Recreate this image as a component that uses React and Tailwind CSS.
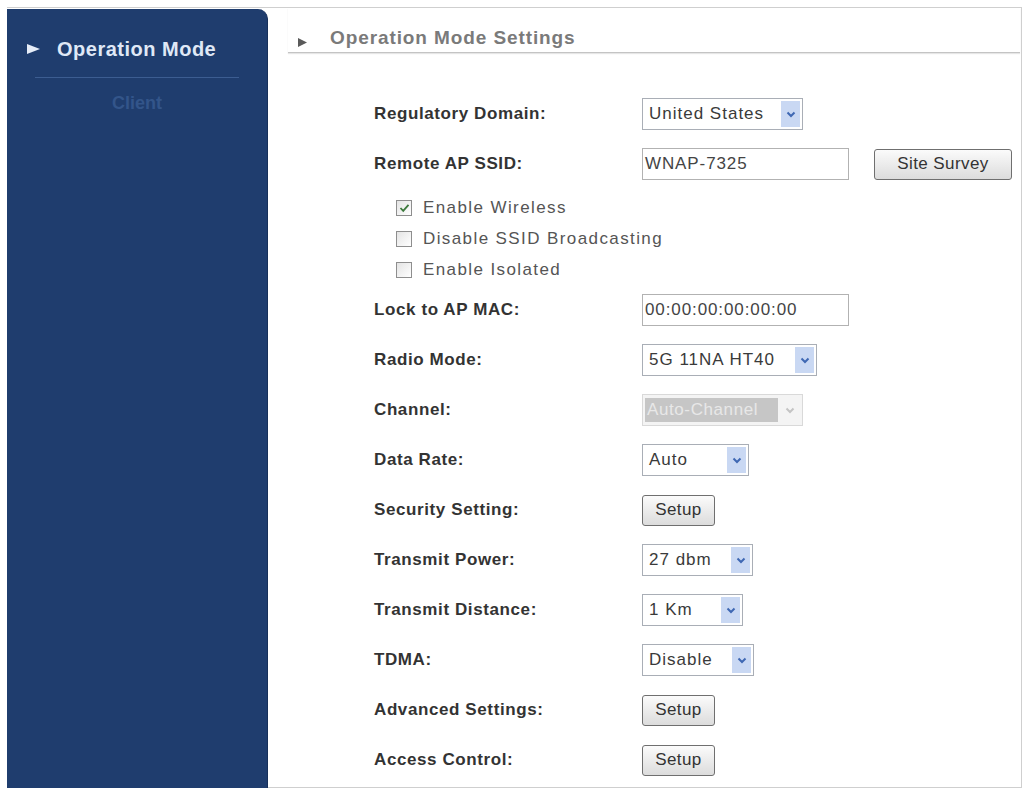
import React from 'react'

const font = { fontFamily: '"Liberation Sans", Arial, sans-serif' }

function Chevron({ color = '#3f68b3' }) {
  return (
    <svg width="10" height="7" viewBox="0 0 10 7">
      <path d="M1.5 1.5 L5 5 L8.5 1.5" fill="none" stroke={color} strokeWidth="2" />
    </svg>
  )
}

function Select({ value, width, disabled }) {
  if (disabled) {
    return (
      <div className={`flex items-center h-[32px] border border-[#d9d9d9] bg-[#f4f4f4] ${width}`}>
        <div className="flex-1 ml-[2px] px-[2px] h-[24px] bg-[#c6c6c6] text-[#e8e8e8] text-[17px] tracking-[0.6px] leading-[24px] whitespace-nowrap overflow-hidden">{value}</div>
        <div className="w-[24px] h-full flex items-center justify-center">
          <Chevron color="#c4c4c4" />
        </div>
      </div>
    )
  }
  return (
    <div className={`flex items-center h-[32px] border border-[#a9aeb6] bg-white ${width}`}>
      <div className="flex-1 pl-[6px] text-[17px] tracking-[1px] text-[#3a3a3a] whitespace-nowrap">{value}</div>
      <div className="w-[19px] h-[26px] mr-[2px] bg-[#c9d8f3] flex items-center justify-center">
        <Chevron />
      </div>
    </div>
  )
}

function TextInput({ value }) {
  return (
    <div className="w-[207px] h-[32px] border border-[#b2b2b2] bg-white flex items-center pl-[2px] text-[17px] tracking-[0.9px] text-[#444]">
      {value}
    </div>
  )
}

function Button({ children, width = 'w-[73px]' }) {
  return (
    <div className={`${width} h-[31px] border border-[#6f6f6f] rounded-[3px] bg-gradient-to-b from-[#fbfbfb] to-[#dcdcdc] flex items-center justify-center text-[17px] tracking-[0.4px] text-[#333]`}>
      {children}
    </div>
  )
}

function Checkbox({ checked, label }) {
  return (
    <div className="h-[31px] flex items-center pl-[22px]">
      <div className="w-[16px] h-[16px] border border-[#8e8e8e] bg-gradient-to-br from-[#e4e4e4] to-white flex items-center justify-center">
        {checked && (
          <svg width="11" height="10" viewBox="0 0 11 10">
            <path d="M1.5 5 L4.2 7.8 L9.5 1.8" fill="none" stroke="#3d7a3d" strokeWidth="1.8" />
          </svg>
        )}
      </div>
      <span className="ml-[11px] text-[17px] text-[#555] tracking-[1.4px]">{label}</span>
    </div>
  )
}

function Row({ label, children }) {
  return (
    <div className="h-[50px] flex items-center">
      <div className="w-[268px] text-[17px] font-bold text-[#333] tracking-[0.6px]">{label}</div>
      {children}
    </div>
  )
}

export default function App() {
  return (
    <div className="w-[1029px] h-[790px] bg-white pt-[7px] pl-[7px]" style={font}>
      <div className="w-[1015px] h-[781px] border-t border-r border-b border-[#cfcfcf] flex">
        {/* sidebar */}
        <div className="w-[261px] h-full bg-[#1f3d6e] rounded-tr-[10px] mt-[1px] border-r border-[#17305a]">
          <div className="flex items-center h-[57px] pt-[23px] pl-[20px]">
            <svg width="13" height="10" viewBox="0 0 13 10" className="mr-[17px]">
              <path d="M0 0 L13 5 L0 10 Z" fill="#e6edf8" />
            </svg>
            <span className="text-[20px] font-bold text-[#dfe8f6] tracking-[0.5px]">Operation Mode</span>
          </div>
          <div className="mx-[28px] mt-[11px] border-t border-[#3c5d91]" />
          <div className="text-center text-[18px] font-bold text-[#33558a] mt-[12px]">Client</div>
        </div>

        {/* content */}
        <div className="flex-1 pl-[20px] pr-[1px]">
          <div className="h-[45px] flex items-end pb-[0px] border-b border-[#c4c4c4] shadow-[0_1px_1px_#e6e6e6]">
            <svg width="9" height="9" viewBox="0 0 9 9" className="ml-[10px] mr-[23px] mb-[5px]">
              <path d="M0 0 L9 4.5 L0 9 Z" fill="#5a5a5a" />
            </svg>
            <span className="text-[19px] font-bold text-[#7a7a7a] tracking-[0.9px]">Operation Mode Settings</span>
          </div>

          <div className="pl-[86px] pt-[36px]">
            <Row label="Regulatory Domain:">
              <Select value="United States" width="w-[161px]" />
            </Row>
            <Row label="Remote AP SSID:">
              <TextInput value="WNAP-7325" />
              <div className="ml-[25px]">
                <Button width="w-[138px]">Site Survey</Button>
              </div>
            </Row>
            <div className="pt-[3px]">
              <Checkbox checked label="Enable Wireless" />
              <Checkbox label="Disable SSID Broadcasting" />
              <Checkbox label="Enable Isolated" />
            </div>
            <Row label="Lock to AP MAC:">
              <TextInput value="00:00:00:00:00:00" />
            </Row>
            <Row label="Radio Mode:">
              <Select value="5G 11NA HT40" width="w-[175px]" />
            </Row>
            <Row label="Channel:">
              <Select value="Auto-Channel" width="w-[161px]" disabled />
            </Row>
            <Row label="Data Rate:">
              <Select value="Auto" width="w-[107px]" />
            </Row>
            <Row label="Security Setting:">
              <Button>Setup</Button>
            </Row>
            <Row label="Transmit Power:">
              <Select value="27 dbm" width="w-[111px]" />
            </Row>
            <Row label="Transmit Distance:">
              <Select value="1 Km" width="w-[101px]" />
            </Row>
            <Row label="TDMA:">
              <Select value="Disable" width="w-[112px]" />
            </Row>
            <Row label="Advanced Settings:">
              <Button>Setup</Button>
            </Row>
            <Row label="Access Control:">
              <Button>Setup</Button>
            </Row>
          </div>
        </div>
      </div>
    </div>
  )
}
